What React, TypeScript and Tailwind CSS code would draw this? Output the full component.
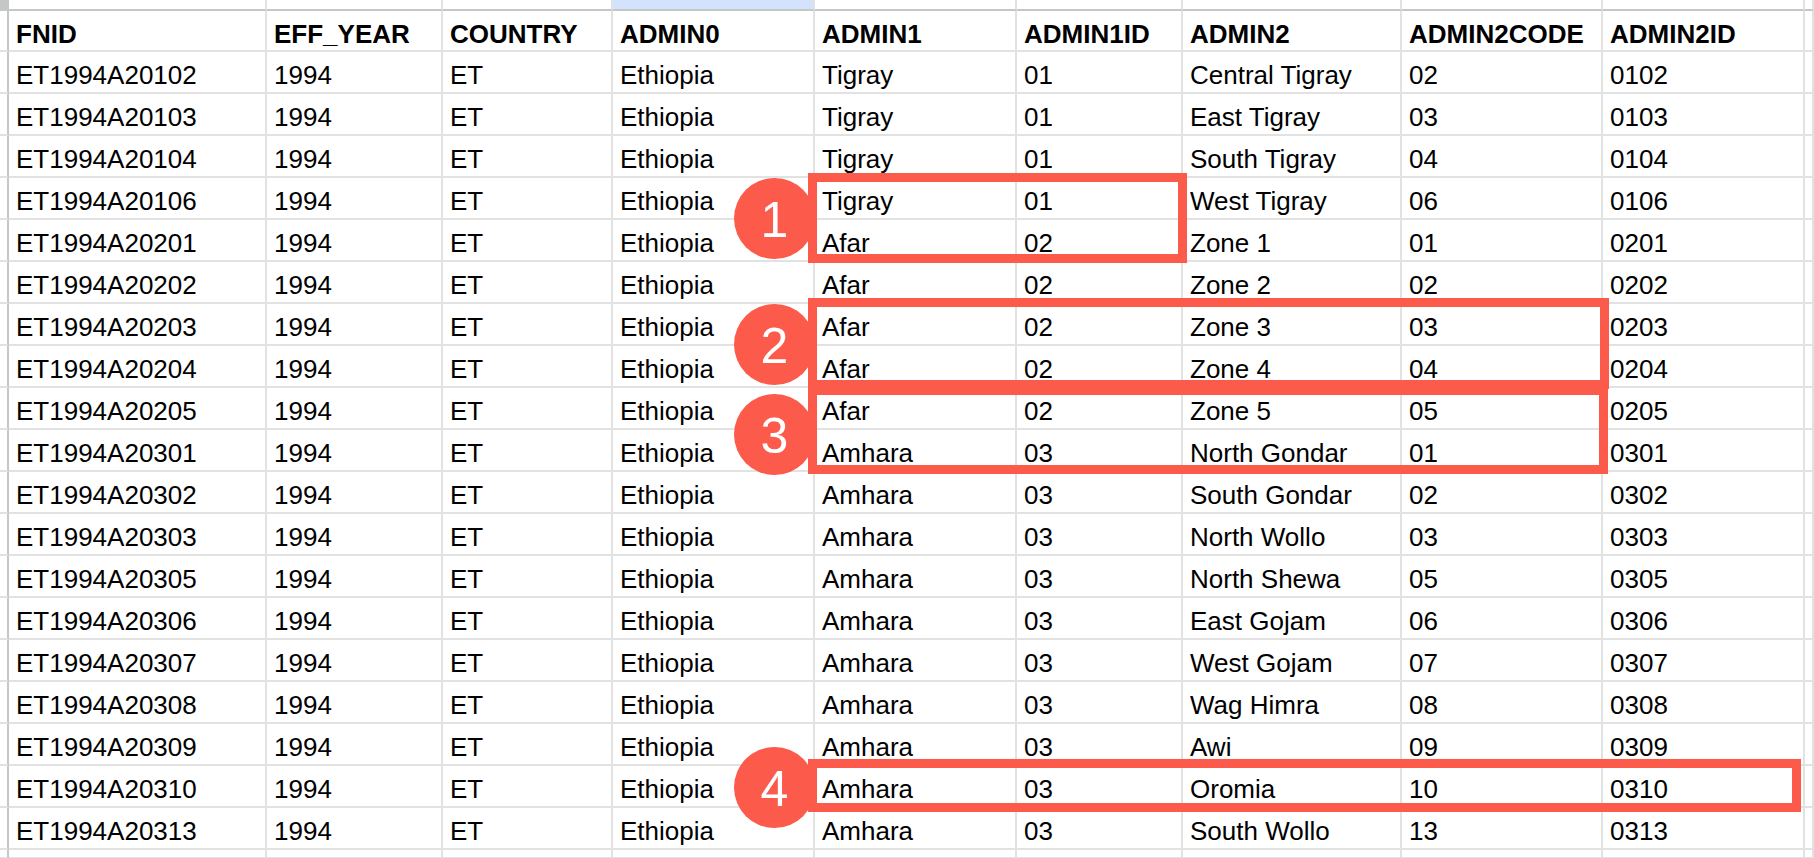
const COL_WIDTHS = "9px 258px 176px 170px 202px 202px 166px 219px 201px 202px 1fr";
const ROW_HEIGHTS = "11px 41px repeat(19, 42px) 1fr";

const HEADERS = [
  "FNID",
  "EFF_YEAR",
  "COUNTRY",
  "ADMIN0",
  "ADMIN1",
  "ADMIN1ID",
  "ADMIN2",
  "ADMIN2CODE",
  "ADMIN2ID",
];

// [fnid suffix, admin1, admin1id, admin2, admin2code]
const ROWS: [string, string, string, string, string][] = [
  ["0102", "Tigray", "01", "Central Tigray", "02"],
  ["0103", "Tigray", "01", "East Tigray", "03"],
  ["0104", "Tigray", "01", "South Tigray", "04"],
  ["0106", "Tigray", "01", "West Tigray", "06"],
  ["0201", "Afar", "02", "Zone 1", "01"],
  ["0202", "Afar", "02", "Zone 2", "02"],
  ["0203", "Afar", "02", "Zone 3", "03"],
  ["0204", "Afar", "02", "Zone 4", "04"],
  ["0205", "Afar", "02", "Zone 5", "05"],
  ["0301", "Amhara", "03", "North Gondar", "01"],
  ["0302", "Amhara", "03", "South Gondar", "02"],
  ["0303", "Amhara", "03", "North Wollo", "03"],
  ["0305", "Amhara", "03", "North Shewa", "05"],
  ["0306", "Amhara", "03", "East Gojam", "06"],
  ["0307", "Amhara", "03", "West Gojam", "07"],
  ["0308", "Amhara", "03", "Wag Himra", "08"],
  ["0309", "Amhara", "03", "Awi", "09"],
  ["0310", "Amhara", "03", "Oromia", "10"],
  ["0313", "Amhara", "03", "South Wollo", "13"],
];

const MARKS = [
  { n: "1", box: "left-[808px] top-[173px] w-[379px] h-[90px]", dot: "top-[178px]" },
  { n: "2", box: "left-[808px] top-[298px] w-[801px] h-[91px]", dot: "top-[304px]" },
  { n: "3", box: "left-[808px] top-[386px] w-[800px] h-[88px]", dot: "top-[394px]" },
  { n: "4", box: "left-[808px] top-[759px] w-[993px] h-[53px]", dot: "top-[747px]" },
];

function Cell({ children, bold }: { children?: React.ReactNode; bold?: boolean }) {
  return (
    <div
      className={`flex items-center overflow-hidden whitespace-nowrap border-r-2 border-b-2 border-[#e2e2e2] pt-[7px] pl-[7px] text-[26px] text-black ${
        bold ? "font-bold" : ""
      }`}
    >
      {children}
    </div>
  );
}

function RowHead({ top }: { top?: boolean }) {
  return (
    <div
      className={`border-r-2 border-[#c4c7c5] ${
        top ? "border-b-2 bg-[#c4c7c5]" : "border-b-2 border-b-[#e2e2e2] bg-white"
      }`}
    />
  );
}

export default function App() {
  const blanks = Array.from({ length: 10 });

  return (
    <div
      className="relative h-[858px] w-[1814px] overflow-hidden bg-white"
      style={{ fontFamily: '"Liberation Sans", Arial, sans-serif' }}
    >
      <div
        className="grid h-full w-full"
        style={{ gridTemplateColumns: COL_WIDTHS, gridTemplateRows: ROW_HEIGHTS }}
      >
        {/* column letter strip, cut off at the top */}
        <RowHead top />
        {blanks.map((_, i) => (
          <div
            key={`top-${i}`}
            className={`border-r-2 border-b-2 border-r-[#e2e2e2] border-b-[#c4c7c5] ${
              i === 3 ? "bg-[#d3e3fd]" : "bg-white"
            }`}
          />
        ))}

        {/* header row */}
        <RowHead />
        {HEADERS.map((h) => (
          <Cell key={h} bold>
            {h}
          </Cell>
        ))}
        <Cell />

        {ROWS.map(([id, a1, a1id, a2, a2code]) => (
          <div key={id} className="contents">
            <RowHead />
            <Cell>ET1994A2{id}</Cell>
            <Cell>1994</Cell>
            <Cell>ET</Cell>
            <Cell>Ethiopia</Cell>
            <Cell>{a1}</Cell>
            <Cell>{a1id}</Cell>
            <Cell>{a2}</Cell>
            <Cell>{a2code}</Cell>
            <Cell>{id}</Cell>
            <Cell />
          </div>
        ))}

        {/* next row peeking at the bottom */}
        <RowHead />
        {blanks.map((_, i) => (
          <Cell key={`end-${i}`} />
        ))}
      </div>

      {/* annotation boxes and numbered markers */}
      {MARKS.map((m) => (
        <div key={`box-${m.n}`} className={`absolute border-[9px] border-[#fc5a4b] ${m.box}`} />
      ))}
      {MARKS.map((m) => (
        <div
          key={`dot-${m.n}`}
          className={`absolute left-[734px] flex h-[81px] w-[81px] items-center justify-center rounded-full bg-[#fc5a4b] pt-[2px] text-[50px] leading-none text-white ${m.dot}`}
        >
          {m.n}
        </div>
      ))}
    </div>
  );
}
